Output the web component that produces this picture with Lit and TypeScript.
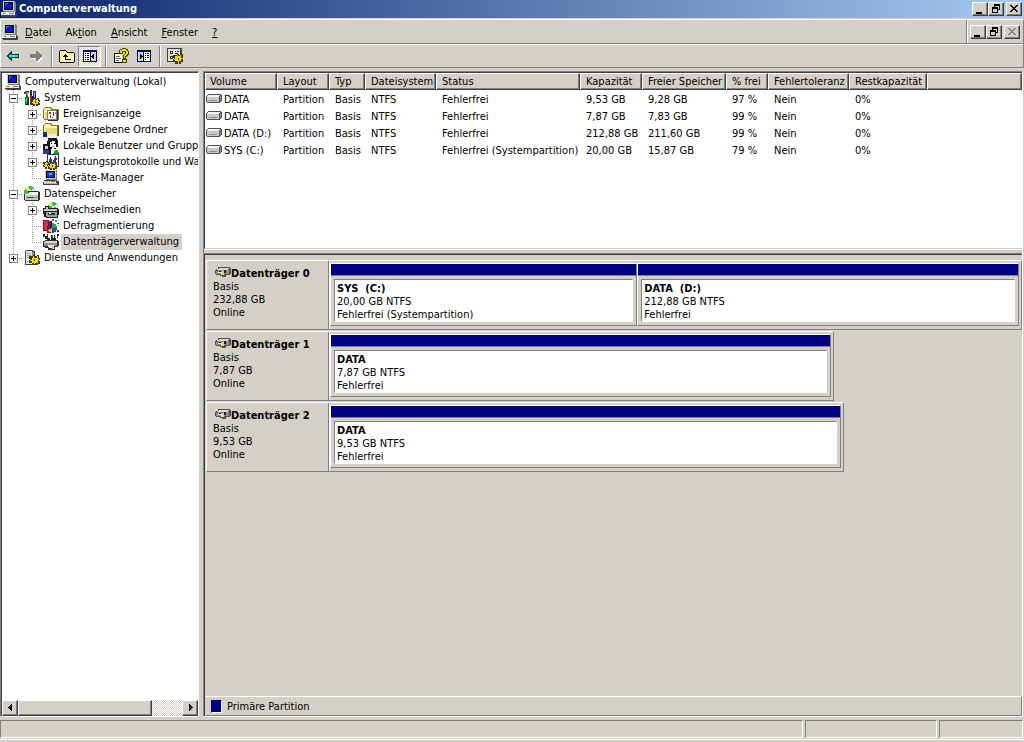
import { LitElement, html, css, svg, nothing } from "lit";
import type { TemplateResult } from "lit";
import { customElement, property } from "lit/decorators.js";
import { classMap } from "lit/directives/class-map.js";

const monitor = svg`
  <path fill="#808080" d="M3 0h11v1h1v10h-1v1H3z"/><path fill="#d4d0c8" d="M2 0h11v10H2z"/>
  <path fill="#000" d="M3 1h9v8H3z"/><path fill="#0018c8" d="M4 2h7v6H4z"/><path fill="#3c64ff" d="M4 2h3v1H5v2H4z"/>
  <path fill="#404040" d="M0 11h15v1h1v4H1v-1H0z"/><path fill="#e8e8e0" d="M0 11h14v3H0z"/>
  <path fill="#808080" d="M8 12h5v1H8z"/><path fill="#20b040" d="M2 12h2v1H2z"/>`;
const gear = (x: number, y: number) => svg`<g transform="translate(${x} ${y})">
  <path fill="#403800" d="M3 0h2v1h1V0h2v2h1v2H8v1h1v2H7v1H5V7H4v1H2V6H0V4h1V3H0V1h3z"/>
  <path fill="#f0d820" d="M3 1h1v1h2V1h1v2h1v1H7v2H5v1H4V6H2V5H1V4h1V2h1z"/><path fill="#403800" d="M4 3h1v2H4z"/></g>`;
const folder = svg`
  <path fill="#807820" d="M0 3h1V2h1V1h6v1h1v1h7v11H1v-1H0z"/><path fill="#fff8a0" d="M1 3h1V2h5v1h1v1h6v9H1z"/>
  <path fill="#e8d870" d="M2 6h12v7H2z"/>`;

const icons: Record<string, TemplateResult> = {
  computer: monitor,
  system: svg`
    <path fill="#008020" d="M1 7h4v8H1z"/><path fill="#002808" d="M4 7h1v8H2v-1h2z"/><path fill="#60e070" d="M2 8h1v4H2z"/>
    <path fill="#c01010" d="M6 6h3v9H6z"/><path fill="#500" d="M8 6h1v9H8z"/><path fill="#404040" d="M1 1h4v2H4v4H2V4H0V2h1z"/>
    <path fill="#909090" d="M2 2h2v4H3V4H2z"/><path fill="#303030" d="M6 0h2v6H6z"/><path fill="#1830c0" d="M9 1h3v8H9z"/>
    <path fill="#90a8f0" d="M10 2h1v5h-1z"/>${gear(7, 8)}`,
  events: svg`${folder}
    <path fill="#808060" d="M4 4h10v10H4z"/><path fill="#fff" d="M5 5h8v8H5z"/><path fill="#303030" d="M14 4h1v11H5v-1h9z"/>
    <path fill="#c02020" d="M6 6h2v2H6zM7 9h1v3H7z"/><path fill="#2030c0" d="M10 6h1v4h-1zM9 11h1v1H9z"/><path fill="#e08080" d="M12 6h1v2h-1z"/>`,
  shared: svg`${folder}
    <path fill="#404040" d="M15 4h1v10H6v-1h9z"/><path fill="#e8e8ff" d="M0 10h5v2h9v2H5v2H0z"/><path fill="#0020a0" d="M0 10h4v5H0z"/><path fill="#2858e0" d="M1 11h2v1H1z"/>`,
  users: svg`
    <path fill="#111" d="M5 0h9v2h1v7h-2v2H8V9H5V6H4V3h1z"/><path fill="#f8f0e8" d="M7 4h2V3h3v3h1v4h-2v1H9V9H7z"/>
    <path fill="#222" d="M8 5h1v1H8zM11 5h1v1h-1z"/><path fill="#c08060" d="M9 8h2v1H9z"/>
    <path fill="#111" d="M0 6h5v3h3v7H0z"/><path fill="#f0c8a0" d="M2 8h3v3H2z"/><path fill="#2040a0" d="M0 12h6v4H0z"/>
    <path fill="#28a040" d="M10 12h5v2h1v2h-6z"/><path fill="#fff" d="M8 11h4v2h-1v2H8z"/>`,
  perf: svg`
    <path fill="#303060" d="M4 0h12v13H4z"/><path fill="#fff" d="M5 1h10v11H5z"/><path fill="#2030c0" d="M6 5h1V3h1v2h1v3h1V6h1V4h1V2h1v2h1v2h-1v2h-2v2H9V8H7V7H6z"/>
    <path fill="#c02020" d="M6 9h2v1H6zM13 8h1v2h-1z"/>${gear(0, 7)}${gear(5, 8)}`,
  device: svg`<g transform="translate(2 0)"><path fill="#808080" d="M1 0h11v10H1z"/><path fill="#d4d0c8" d="M0 0h11v9H0z"/>
    <path fill="#000" d="M1 1h9v7H1z"/><path fill="#0838e0" d="M2 2h7v5H2z"/><path fill="#70a0ff" d="M4 3h3v2H4z"/></g>
    <path fill="#404040" d="M1 10h13v1h2v4H0v-3h1z"/><path fill="#e8e8e0" d="M1 11h12v2H1z"/><path fill="#808080" d="M2 11h1v1H2zM4 11h1v1H4zM6 11h1v1H6zM8 11h4v1H8z"/>
    <path fill="#b0b0b0" d="M1 13h13v1H1z"/>`,
  storage: svg`
    <circle cx="6" cy="6" r="6" fill="#40b858"/><path fill="#e8f060" d="M6 6L1 3a6 6 0 0 1 4-3z"/><path fill="#a0f0e8" d="M6 6l4-5 2 4z"/><circle cx="6" cy="5" r="1.4" fill="#fff"/>
    <path fill="#303030" d="M0 8h4V5h11v1h1v8h-1v1H1v-1H0z"/><path fill="#c4c4c0" d="M1 9h13v5H1z"/><path fill="#f4f4f0" d="M5 6h9v1H5zM4 7h10v2H1V8h3z"/>
    <path fill="#404040" d="M3 11h7v1H3z"/><path fill="#20c040" d="M11 11h2v1h-2z"/>`,
  removable: svg`
    <circle cx="10" cy="5" r="5" fill="#40b858"/><path fill="#e8f060" d="M10 5L5 3a5 5 0 0 1 4-3z"/><path fill="#d0f8f0" d="M10 5l4-3 1 4z"/><circle cx="10" cy="5" r="1.4" fill="#fff"/>
    <path fill="#202020" d="M0 6h2V4h4v2h9v1h1v6h-1v3H3v-1H1v-3H0z"/><path fill="#c8c8c4" d="M1 7h2V5h2v2h9v2H1z"/><path fill="#a0a09c" d="M3 10h11v5H4v-1H3z"/>
    <path fill="#303030" d="M5 11h7v2H5z"/><path fill="#fff" d="M6 11h2v1H6z"/>`,
  defrag: svg`
    <path fill="#a00818" d="M0 2h6v1h3v12H4v-2H0z"/><path fill="#e03040" d="M1 3h4v9H1z"/><circle cx="9" cy="10" r="5" fill="#500860"/>
    <path fill="#20b040" d="M9 10V5a5 5 0 0 1 5 5z"/><path fill="#2840d0" d="M9 10h5a5 5 0 0 1-5 5z"/><path fill="#f0c820" d="M9 10v5a5 5 0 0 1-4-3z"/>
    <path fill="#e020a0" d="M9 1h2v2H9zM14 5h2v1h-2z"/><path fill="#20b0b0" d="M12 2h2v2h-2z"/><path fill="#2030c0" d="M14 12h2v2h-2z"/>`,
  diskmgmt: svg`
    <path fill="#202020" d="M0 0h2v2h2V0h1v4h2v3H4V5H2V3H0zM8 1h2v3h1V1h1v3h2V0h2v2h-1v2h-2v3H8z"/><path fill="#4060d0" d="M1 2h1v1H1zM14 2h1v1h-1zM9 1h1v3H9z"/>
    <path fill="#303030" d="M0 7h2V6h13v1h1v5h-1v1h-3v3H5v-2H2v-1H0z"/><path fill="#909090" d="M1 9h13v3H1z"/><path fill="#d8d8d4" d="M2 7h12v2H1V8h1z"/>
    <path fill="#e8e8f0" d="M5 11h6v3H6v-1H5z"/><path fill="#e8d840" d="M9 12h2v3H9z"/>`,
  services: svg`
    <path fill="#404040" d="M1 1h1V0h7v1h2v14H1z"/><path fill="#e8e8e4" d="M2 1h6v13H2z"/><path fill="#909090" d="M8 2h2v12H8zM3 3h4v1H3zM3 5h4v1H3zM3 7h4v1H3z"/>
    <path fill="#20b040" d="M3 11h1v1H3z"/><g transform="translate(5 5) scale(1.25)">${gear(0, 0)}</g>`,
  back: svg`<path fill="#003838" d="M1 8l5-5h1v3h7v4H7v3H6z"/><path fill="#30e0e0" d="M3 8l3-3v2h7v2H6v2z"/>`,
  forward: svg`<path fill="#fff" d="M15 9l-5 5H9v-3H3v-1h8z"/><path fill="#808080" d="M14 8L9 3H8v3H2v4h6v3h1z"/>`,
  up: svg`<path fill="#000" d="M0 3h1V2h6v1h1v1h7v1h1v9h-1v1H1v-1H0z"/><path fill="#fff8a0" d="M1 3h6v1h1v1h7v9H1z"/>
    <path fill="#000" d="M6 6h1v1h1v1h1v1H7v2h5v1H6V9H4V8h1V7h1z"/>`,
  treeToggle: svg`<path fill="#000080" d="M1 2h14v12H1z"/><path fill="#fff" d="M2 4h6v9H2z"/><path fill="#d4d0c8" d="M9 4h5v9H9z"/>
    <path fill="#000" d="M3 5h1v1H3zM5 5h2v1H5zM3 7h1v1H3zM5 7h2v1H5zM3 9h1v1H3zM5 9h2v1H5zM3 11h1v1H3zM5 11h2v1H5zM12 6v5h-1v-1h-1V9H9V8h1V7h1V6z"/>`,
  help: svg`<path fill="#000" d="M1 5h8v10H1z"/><path fill="#fff" d="M2 6h7v8H2z"/><path fill="#606060" d="M3 8h4v1H3zM3 10h5v1H3zM3 12h3v1H3z"/>
    <path fill="#404000" d="M6 2h1V1h2V0h4v1h2v2h1v4h-1v1h-1v1h-1v2h-3V7h1V6h1V4h-2v2H6zM9 11h5v4H9z"/>
    <path fill="#f0e800" d="M7 2h2V1h4v1h1v1h1v3h-1v1h-1v1h-1v2h-1V7h1V6h1V3H9v2H7zM10 12h3v2h-3z"/>`,
  actionPane: svg`<path fill="#000080" d="M1 2h14v12H1z"/><path fill="#d4d0c8" d="M2 4h5v9H2z"/><path fill="#fff" d="M8 4h6v9H8z"/>
    <path fill="#000" d="M4 6v5h1v-1h1V9h1V8H6V7H5V6zM9 5h1v1H9zM11 5h2v1h-2zM9 7h1v1H9zM11 7h2v1h-2zM9 9h1v1H9zM11 9h2v1h-2zM9 11h1v1H9z"/>`,
  settings: svg`<path fill="#404040" d="M0 0h15v14H0z"/><path fill="#e4e0d8" d="M1 1h12v12H1z"/><path fill="#303030" d="M3 3h3v3H3zM8 3h1v1H8zM10 3h2v1h-2zM3 8h3v3H3zM8 5h3v1H8z"/>
    <path fill="#fff" d="M4 4h1v1H4zM4 9h1v1H4z"/><g transform="translate(6 6) scale(1.2)">${gear(0, 0)}</g>`,
  minimize: svg`<path fill="currentColor" d="M4 11h6v2H4z"/>`,
  restore: svg`<path fill="currentColor" fill-rule="evenodd" d="M6 3h6v6h-2V8h1V5H7v1H6zM4 6h6v6H4zM5 8v3h4V8z"/>`,
  close: svg`<path fill="currentColor" d="M4 4h2v1h1v1h2V5h1V4h2v1h-1v1h-1v1H9v1h1v1h1v1h1v1h-2v-1H9V9H7v1H6v1H4v-1h1V9h1V8h1V7H6V6H5V5H4z"/>`,
  left: svg`<path fill="#000" d="M9 4v7H8v-1H7V9H6V8H5V7h1V6h1V5h1V4z"/>`,
  right: svg`<path fill="#000" d="M6 4v7h1v-1h1V9h1V8h1V7H9V6H8V5H7V4z"/>`,
  volume: svg`<path fill="#505050" d="M1 5h1V4h13v1h1v6h-1v1h-1v1H1v-1H0V6h1z"/><path fill="#c8c8c8" d="M1 7h12v5H1z"/>
    <path fill="#f4f4f4" d="M2 5h12v1h-1v1H1V6h1z"/><path fill="#909090" d="M14 6h1v5h-1zM3 10h8v1H3z"/>`,
  disk: svg`<path fill="#505050" d="M3 3h12v1h1v6h-1v1h-4v2H7v-1H5v-1H1v-1H0V6h1V5h2z"/><path fill="#909090" d="M3 6h11v4H1V7h2z"/><path fill="#d8d8d8" d="M4 4h10v1h-1v1H2V5h2z"/>
    <path fill="#e8e8e8" d="M3 8h4v1H3zM6 9h3v2H6z"/><path fill="#e8d840" d="M7 7h2v4H7z"/><path fill="#202020" d="M9 6h2v3H9zM4 7h2v1H4z"/>`,
};

const icon = (name: string) =>
  html`<svg class="icon" viewBox="0 0 16 16" width="16" height="16" aria-hidden="true" shape-rendering="crispEdges">${icons[name]}</svg>`;

const base = css`
  * { box-sizing: border-box; }
  button { font: inherit; color: inherit; margin: 0; padding: 0; border: 0; background: none; }
  .icon { display: block; flex: none; }
  .raised {
    display: grid; place-content: center; overflow: hidden; background: #d4d0c8; color: #000;
    border: 1px solid; border-color: #fff #404040 #404040 #fff; box-shadow: inset -1px -1px #808080;
  }
`;

@customElement("window-buttons")
class WindowButtons extends LitElement {
  @property({ type: Boolean }) inactive = false;
  static styles = [base, css`
    :host { display: flex; }
    .raised { width: 16px; height: 14px; }
    .close { margin-left: 2px; }
    .raised:disabled { color: #808080; }
  `];
  render() {
    return html`
      <button class="raised" aria-label="Minimieren">${icon("minimize")}</button>
      <button class="raised" aria-label="Wiederherstellen">${icon("restore")}</button>
      <button class="raised close" aria-label="Schließen" ?disabled=${this.inactive}>${icon("close")}</button>`;
  }
}

interface Node { label: string; icon: string; open?: boolean; selected?: boolean; children?: Node[]; }

const tree: Node = {
  label: "Computerverwaltung (Lokal)", icon: "computer", open: true, children: [
    { label: "System", icon: "system", open: true, children: [
      { label: "Ereignisanzeige", icon: "events", open: false },
      { label: "Freigegebene Ordner", icon: "shared", open: false },
      { label: "Lokale Benutzer und Gruppen", icon: "users", open: false },
      { label: "Leistungsprotokolle und Warnungen", icon: "perf", open: false },
      { label: "Geräte-Manager", icon: "device" },
    ] },
    { label: "Datenspeicher", icon: "storage", open: true, children: [
      { label: "Wechselmedien", icon: "removable", open: false },
      { label: "Defragmentierung", icon: "defrag" },
      { label: "Datenträgerverwaltung", icon: "diskmgmt", selected: true },
    ] },
    { label: "Dienste und Anwendungen", icon: "services", open: false },
  ],
};

@customElement("console-tree")
class ConsoleTree extends LitElement {
  static styles = [base, css`
    :host { display: flex; flex-direction: column; background: #fff; border: 1px solid; border-color: #808080 #fff #fff #808080; box-shadow: inset 1px 1px #404040; padding: 1px 0 0 1px; }
    .scroller { flex: 1; overflow: hidden; min-height: 0; padding-top: 1px; }
    ul { list-style: none; margin: 0; padding: 0; }
    .row { display: flex; align-items: center; height: 16px; padding-left: 2px; white-space: nowrap; }
    .rail { flex: none; width: 19px; height: 16px; display: flex; align-items: center; padding-left: 5px;
      background: repeating-linear-gradient(#999 0 1px, transparent 1px 2px) 9px 0 / 1px 100% no-repeat; }
    .rail.blank { background: none; }
    .rail.branch { background: repeating-linear-gradient(#999 0 1px, transparent 1px 2px) 9px 0 / 1px 100% no-repeat,
      repeating-linear-gradient(90deg, #999 0 1px, transparent 1px 2px) 9px 8px / 10px 1px no-repeat; }
    .rail.last { background-size: 1px 8px, 10px 1px; }
    .expander { display: block; width: 9px; height: 9px; border: 1px solid #808080;
      background: linear-gradient(#000, #000) 1px 3px / 5px 1px no-repeat, #fff; }
    .expander.plus { background: linear-gradient(#000, #000) 1px 3px / 5px 1px no-repeat, linear-gradient(#000, #000) 3px 1px / 1px 5px no-repeat, #fff; }
    .icon { margin-left: 1px; }
    .label { margin-left: 2px; padding: 0 3px 0 2px; line-height: 16px; }
    .selected { background: #d4d0c8; }
    .scrollbar { display: flex; height: 16px; background: repeating-conic-gradient(#d4d0c8 0 25%, #fff 0 50%) 0 0 / 2px 2px; }
    .arrow { width: 16px; height: 16px; flex: none; }
    .track { flex: 1; }
    .thumb { width: 82%; height: 16px; }
  `];

  private item(node: Node, rails: boolean[], last: boolean, root = false): TemplateResult {
    const hasButton = !root && node.open !== undefined;
    const inner = root ? [] : [...rails, !last];
    return html`<li role="treeitem" aria-selected=${node.selected ? "true" : "false"}>
      <div class="row">
        ${rails.map((on) => html`<span class=${classMap({ rail: true, blank: !on })}></span>`)}
        ${root ? nothing : html`<span class=${classMap({ rail: true, branch: true, last })}>
          ${hasButton ? html`<button class=${classMap({ expander: true, plus: !node.open })} aria-label=${node.label}></button>` : nothing}
        </span>`}
        ${icon(node.icon)}<span class=${classMap({ label: true, selected: !!node.selected })}>${node.label}</span>
      </div>
      ${node.children ? html`<ul role="group">${node.children.map((c, i, all) => this.item(c, inner, i === all.length - 1))}</ul>` : nothing}
    </li>`;
  }

  render() {
    return html`
      <div class="scroller"><ul role="tree">${this.item(tree, [], true, true)}</ul></div>
      <div class="scrollbar">
        <button class="raised arrow" aria-label="Nach links">${icon("left")}</button>
        <div class="track"><div class="raised thumb"></div></div>
        <button class="raised arrow" aria-label="Nach rechts">${icon("right")}</button>
      </div>`;
  }
}

const columns: [string, number][] = [
  ["Volume", 72], ["Layout", 52], ["Typ", 36], ["Dateisystem", 71], ["Status", 144], ["Kapazität", 62],
  ["Freier Speicher", 84], ["% frei", 42], ["Fehlertoleranz", 81], ["Restkapazität", 78],
];
const volumes = [
  ["DATA", "Partition", "Basis", "NTFS", "Fehlerfrei", "9,53 GB", "9,28 GB", "97 %", "Nein", "0%"],
  ["DATA", "Partition", "Basis", "NTFS", "Fehlerfrei", "7,87 GB", "7,83 GB", "99 %", "Nein", "0%"],
  ["DATA (D:)", "Partition", "Basis", "NTFS", "Fehlerfrei", "212,88 GB", "211,60 GB", "99 %", "Nein", "0%"],
  ["SYS (C:)", "Partition", "Basis", "NTFS", "Fehlerfrei (Systempartition)", "20,00 GB", "15,87 GB", "79 %", "Nein", "0%"],
];

@customElement("volume-list")
class VolumeList extends LitElement {
  static styles = [base, css`
    :host { display: block; background: #fff; overflow: hidden; }
    table { width: 100%; table-layout: fixed; border-collapse: separate; border-spacing: 0; }
    th, td { padding: 1px 0 0 5px; text-align: left; font-weight: normal; white-space: nowrap; height: 17px; }
    th { line-height: 14px; background: #d4d0c8; border: 1px solid; border-color: #fff #404040 #404040 #fff; box-shadow: inset -1px -1px #808080; }
    th:first-child { padding-left: 4px; }
    td { line-height: 15px; padding: 2px 0 0 6px; }
    td:first-child { padding-left: 1px; }
    .name { display: flex; align-items: center; gap: 2px; height: 15px; }
    .name .icon { margin-top: -4px; }
  `];
  render() {
    return html`<table>
      <colgroup>${columns.map(([, w]) => html`<col style="width:${w}px">`)}<col></colgroup>
      <thead><tr>${columns.map(([name]) => html`<th scope="col">${name}</th>`)}<th></th></tr></thead>
      <tbody>${volumes.map((row) => html`<tr>${row.map((cell, i) =>
        html`<td>${i ? cell : html`<span class="name">${icon("volume")}${cell}</span>`}</td>`)}<td></td></tr>`)}</tbody>
    </table>`;
  }
}

interface Partition { name: string; size: string; status: string; share: number; }
interface Disk { name: string; size: string; extent: number; parts: Partition[]; }
const disks: Disk[] = [
  { name: "Datenträger 0", size: "232,88 GB", extent: 100, parts: [
    { name: "SYS  (C:)", size: "20,00 GB NTFS", status: "Fehlerfrei (Systempartition)", share: 307 },
    { name: "DATA  (D:)", size: "212,88 GB NTFS", status: "Fehlerfrei", share: 382 } ] },
  { name: "Datenträger 1", size: "7,87 GB", extent: 77, parts: [{ name: "DATA", size: "7,87 GB NTFS", status: "Fehlerfrei", share: 1 }] },
  { name: "Datenträger 2", size: "9,53 GB", extent: 78.2, parts: [{ name: "DATA", size: "9,53 GB NTFS", status: "Fehlerfrei", share: 1 }] },
];

@customElement("disk-map")
class DiskMap extends LitElement {
  static styles = [base, css`
    :host { display: flex; flex-direction: column; min-height: 0; line-height: 13px; }
    .disks { flex: 1; overflow: hidden; padding: 5px 0 0 1px; min-height: 0; }
    .disk { display: flex; height: 70px; margin-bottom: 1px; border: 1px solid; border-color: #fff #808080 #808080 #fff; }
    .info { flex: none; width: 122px; padding: 5px 0 0 6px; border-right: 1px solid #808080; }
    .title { display: flex; align-items: center; font-weight: bold; margin-left: 2px; white-space: nowrap; height: 14px; }
    .title .icon { margin-top: -2px; }
    .parts { flex: 1; min-width: 0; display: flex; border-left: 1px solid #fff; padding: 2px 2px 3px 0; }
    .part { flex-basis: 0; min-width: 0; display: flex; flex-direction: column; border: 1px solid; border-color: #fff #808080 #808080 #fff; }
    .bar { height: 12px; background: #000080; border-bottom: 1px solid #808080; }
    .box { flex: 1; margin: 3px; padding: 2px 0 0 2px; background: #fff; border: 1px solid; border-color: #808080 #fff #fff #808080; white-space: pre; overflow: hidden; }
    .name { font-weight: bold; }
    .legend { display: flex; align-items: center; gap: 5px; height: 20px; padding-left: 5px; border: 1px solid; border-color: #fff #808080 #808080 #d4d0c8; }
    .swatch { width: 11px; height: 13px; background: #000080; border: 1px solid; border-color: #000080 #fff #fff #000080; }
  `];
  render() {
    return html`
      <div class="disks">${disks.map((d) => html`
        <section class="disk" style="width:${d.extent}%">
          <div class="info">
            <div class="title">${icon("disk")}${d.name}</div>
            <div>Basis</div><div>${d.size}</div><div>Online</div>
          </div>
          <div class="parts">${d.parts.map((p) => html`
            <div class="part" style="flex-grow:${p.share}">
              <div class="bar"></div>
              <div class="box"><div class="name">${p.name}</div><div>${p.size}</div><div>${p.status}</div></div>
            </div>`)}</div>
        </section>`)}</div>
      <div class="legend"><span class="swatch"></span>Primäre Partition</div>`;
  }
}

const menus: [string, string, string][] = [["", "D", "atei"], ["Ak", "t", "ion"], ["", "A", "nsicht"], ["", "F", "enster"], ["", "?", ""]];
const tools: [string, string][][] = [
  [["back", "Zurück"], ["forward", "Vorwärts"]],
  [["up", "Eine Ebene nach oben"], ["treeToggle", "Konsolenstruktur"]],
  [["help", "Hilfe"], ["actionPane", "Aktionsbereich"]],
  [["settings", "Einstellungen"]],
];

@customElement("app-root")
class AppRoot extends LitElement {
  static styles = [base, css`
    :host { display: flex; flex-direction: column; height: 100vh; overflow: hidden; background: #d4d0c8; color: #000;
      font: 11px/13px Tahoma, "DejaVu Sans Condensed", "DejaVu Sans", sans-serif; }
    .titlebar { display: flex; align-items: center; gap: 2px; height: 18px; padding: 0 2px 0 1px; flex: none;
      background: linear-gradient(90deg, #0a246a, #a6caf0); color: #fff; }
    h1 { flex: 1; margin: 0; font-size: 11px; line-height: 18px; font-weight: bold; }
    .bars { flex: none; margin-top: 1px; border: 1px solid; border-color: #fff #808080 #808080 #fff; }
    .menubar { display: flex; height: 24px; border-bottom: 1px solid #808080; }
    .menus { flex: 1; display: flex; align-items: center; padding-left: 1px; border-right: 1px solid #808080; }
    .menu { padding: 2px 7px 0; line-height: 18px; }
    .mdi { display: flex; align-items: center; padding: 0 3px 0 2px; border-left: 1px solid #fff; }
    .toolbar { display: flex; align-items: center; height: 23px; border-top: 1px solid #fff; }
    .group { display: flex; align-items: center; }
    .group + .group { border-left: 1px solid #808080; box-shadow: inset 1px 0 #fff; margin-left: 4px; padding-left: 3px; }
    .tool { display: grid; place-content: center; width: 23px; height: 21px; border: 1px solid transparent; }
    .tool.pressed { border-color: #808080 #fff #fff #808080; background: repeating-conic-gradient(#d4d0c8 0 25%, #fff 0 50%) 0 0 / 2px 2px; }
    .panes { flex: 1; min-height: 0; display: grid; grid-template-columns: 199px minmax(0, 1fr); gap: 4px; margin: 3px 1px 0 0; }
    .right { display: flex; flex-direction: column; min-width: 0; min-height: 0; border: 1px solid; border-color: #808080 #fff #fff #808080; }
    volume-list { flex: none; height: 177px; border: 1px solid; border-color: #404040 #d4d0c8 #d4d0c8 #404040; border-right: 0; }
    .splitter { flex: none; height: 6px; border-top: 1px solid #fff; border-bottom: 1px solid #404040; box-shadow: inset 0 -1px #808080; }
    disk-map { flex: 1; border-left: 1px solid #404040; }
    .status { flex: none; display: flex; gap: 2px; height: 23px; padding: 3px 1px 1px 0; margin-bottom: 2px; border-bottom: 1px solid #fff; }
    .status span { border: 1px solid; border-color: #808080 #fff #fff #808080; }
    .message { flex: 1; }
    .mid { width: 132px; }
    .end { width: 84px; }
  `];
  render() {
    return html`
      <header class="titlebar">${icon("computer")}<h1>Computerverwaltung</h1><window-buttons></window-buttons></header>
      <div class="bars">
        <div class="menubar">
          <nav class="menus">${icon("computer")}${menus.map(([a, key, b]) => html`<button class="menu">${a}<u>${key}</u>${b}</button>`)}</nav>
          <div class="mdi"><window-buttons inactive></window-buttons></div>
        </div>
        <div class="toolbar">${tools.map((group) => html`<div class="group">${group.map(([name, label]) => html`
          <button class=${classMap({ tool: true, pressed: name === "treeToggle" })} aria-label=${label}>${icon(name)}</button>`)}</div>`)}</div>
      </div>
      <main class="panes">
        <console-tree></console-tree>
        <div class="right">
          <volume-list></volume-list>
          <div class="splitter"></div>
          <disk-map></disk-map>
        </div>
      </main>
      <footer class="status"><span class="message"></span><span class="mid"></span><span class="end"></span></footer>`;
  }
}
